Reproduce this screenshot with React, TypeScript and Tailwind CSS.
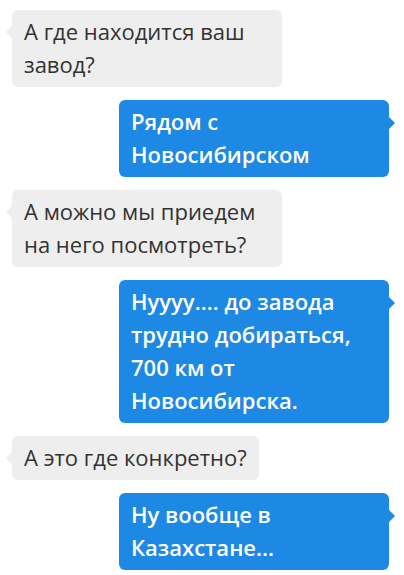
const messages = [
  { me: false, text: 'А где находится ваш завод?' },
  { me: true, text: 'Рядом с Новосибирском' },
  { me: false, text: 'А можно мы приедем на него посмотреть?' },
  { me: true, text: 'Нуууу.... до завода трудно добираться, 700 км от Новосибирска.' },
  { me: false, text: 'А это где конкретно?' },
  { me: true, text: 'Ну вообще в Казахстане...' },
];

function Bubble({ me, text }: { me: boolean; text: string }) {
  if (me) {
    return (
      <div className="flex justify-end pr-[15px]">
        <div className="relative w-[270px] rounded-md bg-[#1e88e5] px-3 py-[5.5px] text-[22px] font-semibold leading-[33px] text-white">
          {text}
          <span className="absolute right-[-6px] top-[17px] h-0 w-0 border-y-[6px] border-l-[6px] border-y-transparent border-l-[#1e88e5]" />
        </div>
      </div>
    );
  }
  return (
    <div className="flex justify-start pl-3">
      <div className="relative max-w-[270px] rounded-md bg-[#eeeeee] px-3 py-[5.5px] text-[22px] leading-[33px] text-[#333333]">
        {text}
        <span className="absolute left-[-6px] top-[16px] h-0 w-0 border-y-[6px] border-r-[6px] border-y-transparent border-r-[#eeeeee]" />
      </div>
    </div>
  );
}

export default function App() {
  return (
    <div className="min-h-[575px] w-full bg-white pt-[9.5px] font-['Open_Sans',sans-serif]">
      <div className="flex flex-col gap-[13px]">
        {messages.map((m, i) => (
          <Bubble key={i} me={m.me} text={m.text} />
        ))}
      </div>
    </div>
  );
}
